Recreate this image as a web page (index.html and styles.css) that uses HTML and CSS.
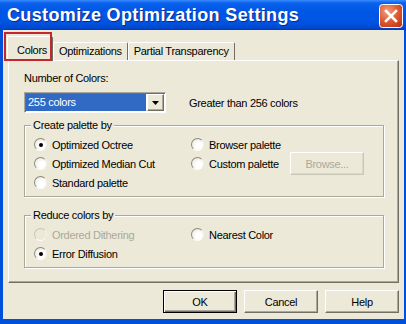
FILE: index.html
```html
<html>
  <head>
    <link rel="stylesheet" href="styles.css">
  </head>
  <body>
    <div class="window">
      <div class="titlebar">
        <span class="title">Customize Optimization Settings</span>
        <button class="close" title="Close">
          <svg width="24" height="24" viewBox="0 0 24 24">
            <defs>
              <radialGradient id="closeFill" cx="35%" cy="30%" r="80%">
                <stop offset="0" stop-color="#f0a080" />
                <stop offset="0.55" stop-color="#e05a34" />
                <stop offset="1" stop-color="#c43a16" />
              </radialGradient>
            </defs>
            <rect x="0.5" y="0.5" width="23" height="23" rx="3" fill="url(#closeFill)" stroke="#fff" />
            <path d="M7 7 L17 17 M17 7 L7 17" stroke="#fff" stroke-width="2.6" stroke-linecap="square" />
          </svg>
        </button>
      </div>

      <div class="client">
        <div class="tabs">
          <div class="tab active">Colors</div>
          <div class="tab">Optimizations</div>
          <div class="tab">Partial Transparency</div>
        </div>
        <span class="highlight"></span>

        <div class="panel">
          <div class="label">Number of Colors:</div>
          <div class="combo-row">
            <div class="combo">
              <span class="combo-value">255 colors</span>
              <span class="combo-btn">
                <svg width="7" height="4" viewBox="0 0 7 4"><path d="M0 0 H7 L3.5 4 Z" fill="#000" /></svg>
              </span>
            </div>
            <span class="hint">Greater than 256 colors</span>
          </div>

          <div class="group group-palette">
            <div class="group-title">Create palette by</div>
            <div class="options">
              <label class="radio checked"><span class="radio-box"></span>Optimized Octree</label>
              <label class="radio"><span class="radio-box"></span>Browser palette</label>
              <label class="radio"><span class="radio-box"></span>Optimized Median Cut</label>
              <div class="option-with-button">
                <label class="radio"><span class="radio-box"></span>Custom palette</label>
                <button class="btn browse" disabled>Browse...</button>
              </div>
              <label class="radio"><span class="radio-box"></span>Standard palette</label>
            </div>
          </div>

          <div class="group group-reduce">
            <div class="group-title">Reduce colors by</div>
            <div class="options">
              <label class="radio disabled"><span class="radio-box"></span>Ordered Dithering</label>
              <label class="radio"><span class="radio-box"></span>Nearest Color</label>
              <label class="radio checked"><span class="radio-box"></span>Error Diffusion</label>
            </div>
          </div>
        </div>

        <div class="actions">
          <button class="btn default">OK</button>
          <button class="btn">Cancel</button>
          <button class="btn">Help</button>
        </div>
      </div>
    </div>
  </body>
</html>
```

FILE: styles.css
```css
* {
  box-sizing: border-box;
}
body,
html {
  margin: 0;
}
body {
  font-family: 'Liberation Sans', Arial, sans-serif;
  font-size: 11px;
  letter-spacing: -0.3px;
  color: #000;
}
button {
  font-family: inherit;
  font-size: inherit;
  letter-spacing: inherit;
  padding: 0;
  margin: 0;
}

.window {
  width: 406px;
  height: 324px;
  display: flex;
  flex-direction: column;
  overflow: hidden;
}

.titlebar {
  height: 30px;
  display: flex;
  align-items: center;
  justify-content: space-between;
  padding: 0 3px 0 7px;
  background: linear-gradient(
    to bottom,
    #3a8cff 0,
    #0a62ec 3px,
    #0058e6 10px,
    #0054e3 22px,
    #0049d0 28px,
    #003cb5 30px
  );
}
.title {
  color: #fff;
  font-weight: bold;
  font-size: 18px;
  letter-spacing: 0.36px;
  text-shadow: 1px 1px 0 #0b2a8c;
}
.close {
  width: 24px;
  height: 24px;
  margin-top: 2px;
  border: none;
  background: none;
  display: block;
}
.close svg {
  display: block;
}

.client {
  flex: 1;
  position: relative;
  display: flex;
  flex-direction: column;
  background: #ece9d8;
  border-style: solid;
  border-color: #0050dc;
  border-width: 0 2px 5px 3px;
  padding: 6px 5px 6px 5px;
}

.tabs {
  display: flex;
  align-items: flex-end;
  height: 24px;
  position: relative;
  z-index: 1;
}
.tab {
  height: 18px;
  line-height: 16px;
  padding: 0 5px;
  background: #ece9d8;
  border: 1px solid;
  border-color: #fff #716f64 transparent #fff;
  border-bottom: none;
  border-radius: 2px 2px 0 0;
  white-space: nowrap;
}
.tab.active {
  height: 25px;
  margin-left: -1px;
  margin-bottom: -1px;
  padding: 5px 5px 0 9px;
}

.highlight {
  position: absolute;
  left: 1px;
  top: 2px;
  width: 48px;
  height: 29px;
  border: 2px solid #c4262e;
  z-index: 2;
}

.panel {
  height: 223px;
  border: 1px solid;
  border-color: #fff #716f64 #716f64 #fff;
  box-shadow: inset -1px -1px 0 #aca899;
  padding: 11px 14px 0 15px;
}
.label {
  line-height: 13px;
}

.combo-row {
  display: flex;
  align-items: center;
  margin-top: 7px;
}
.combo {
  width: 142px;
  height: 21px;
  display: flex;
  gap: 1px;
  padding: 1px;
  background: #fff;
  border: 1px solid;
  border-color: #aca899 #fff #fff #aca899;
  box-shadow: inset 1px 1px 0 #716f64;
}
.combo-value {
  flex: 1;
  background: #316ac5;
  color: #fff;
  line-height: 17px;
  padding-left: 2px;
}
.combo-btn {
  width: 17px;
  display: flex;
  align-items: center;
  justify-content: center;
  background: #ece9d8;
  border: 1px solid;
  border-color: #fff #716f64 #716f64 #fff;
  box-shadow: inset -1px -1px 0 #aca899;
}
.combo-btn svg {
  display: block;
}
.hint {
  margin-left: 23px;
}

.group {
  border: 1px solid #aca899;
  box-shadow: inset 1px 1px 0 #fff, 1px 1px 0 #fff;
  padding: 0 0 4px 9px;
}
.group-palette {
  margin-top: 12px;
}
.group-reduce {
  margin-top: 18px;
}
.group-title {
  width: fit-content;
  margin: -7px 0 0 -3px;
  padding: 0 2px;
  line-height: 13px;
  background: #ece9d8;
}
.options {
  display: grid;
  grid-template-columns: 157px 1fr;
  grid-auto-rows: 19px;
  align-items: center;
  margin-top: 3px;
}

.radio {
  display: flex;
  align-items: center;
  gap: 5px;
  white-space: nowrap;
}
.radio-box {
  width: 13px;
  height: 13px;
  border-radius: 50%;
  border: 1px solid;
  border-color: #8d8a7e #f4f3ee #fff #8d8a7e;
  background: radial-gradient(circle at 62% 62%, #fff 30%, #e4e1d4 100%);
  display: flex;
  align-items: center;
  justify-content: center;
}
.radio.checked .radio-box::after {
  content: '';
  width: 4px;
  height: 4px;
  border-radius: 50%;
  background: #000;
}
.radio.disabled {
  color: #aca899;
}
.radio.disabled .radio-box {
  border-color: #c9c6b8 #f4f3ee #fff #c9c6b8;
  background: #ece9d8;
}

.option-with-button {
  display: flex;
  align-items: center;
}
.option-with-button .radio {
  flex: 0 0 99px;
}

.btn {
  width: 74px;
  height: 23px;
  background: #ece9d8;
  color: #000;
  border: 1px solid;
  border-color: #fff #716f64 #716f64 #fff;
  box-shadow: inset -1px -1px 0 #aca899;
}
.btn.default {
  border-color: #000;
  box-shadow: inset 1px 1px 0 #fff, inset -1px -1px 0 #716f64, inset -2px -2px 0 #aca899;
}
.btn.browse {
  color: #aca899;
  border-color: #fff #c9c6b8 #c9c6b8 #fff;
  box-shadow: inset -1px -1px 0 #dcd9ca;
}

.actions {
  display: flex;
  justify-content: flex-end;
  gap: 7px;
  margin-top: 7px;
}
```
